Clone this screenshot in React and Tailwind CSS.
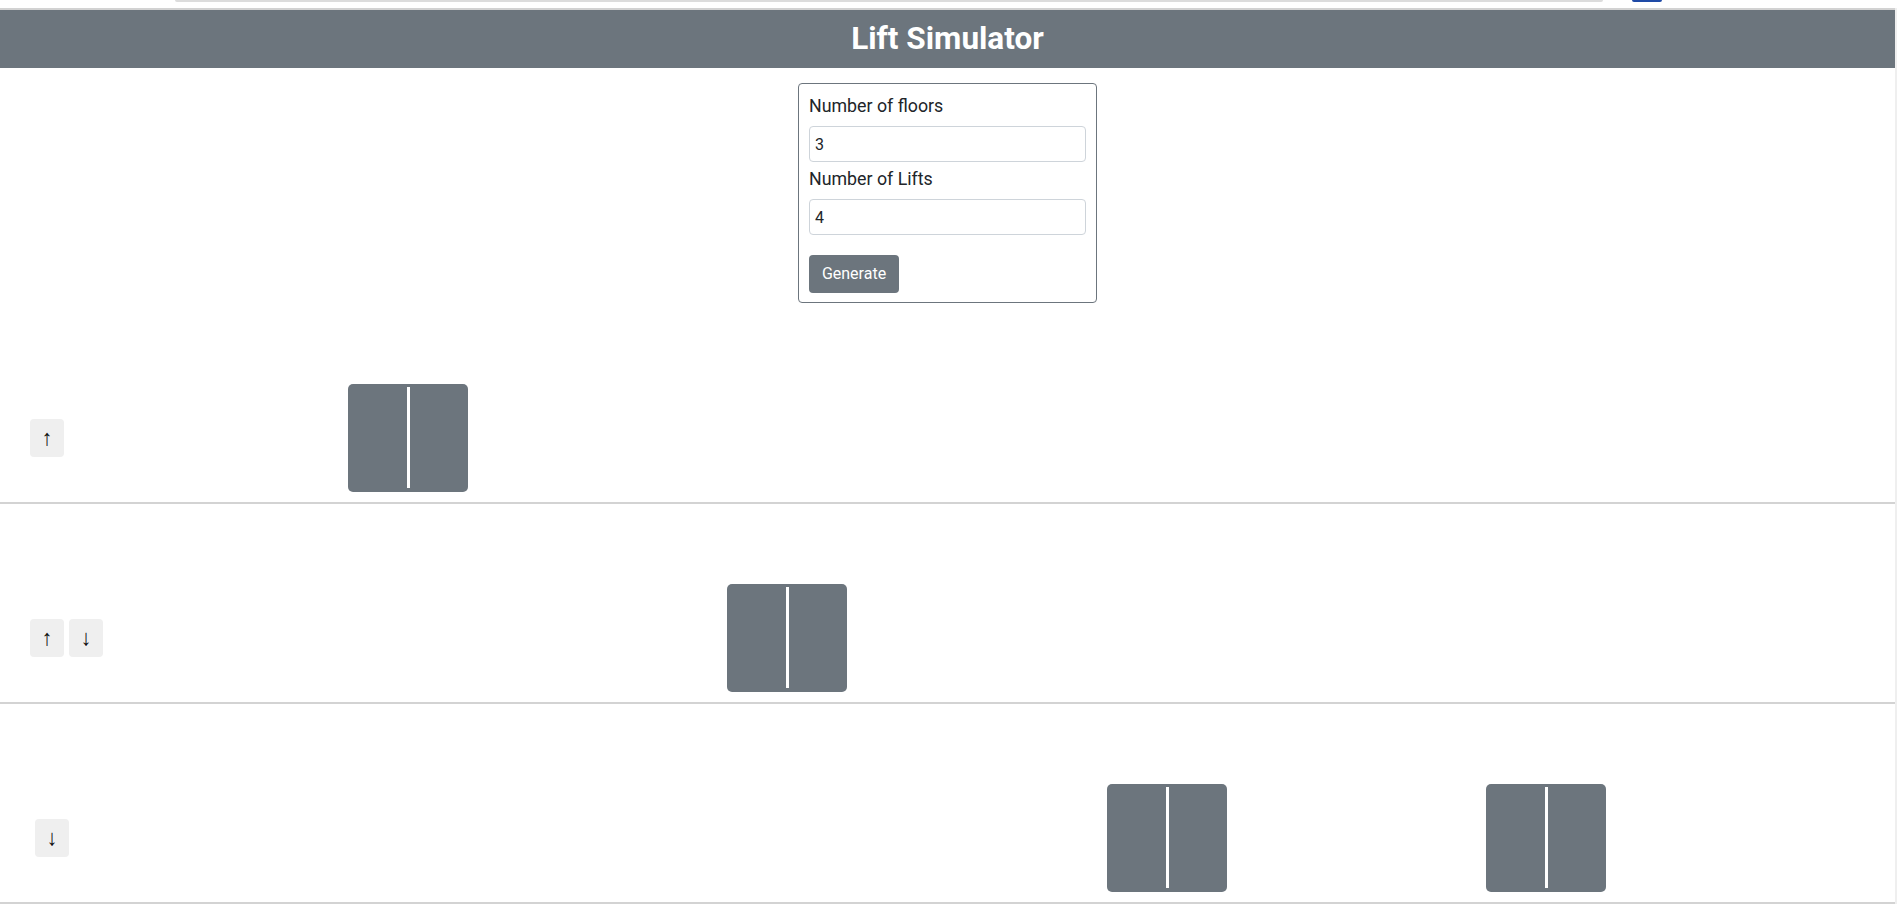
import React from "react";

const floors = [
  { n: 3, up: true, down: false, lifts: [0] },
  { n: 2, up: true, down: true, lifts: [1] },
  { n: 1, up: false, down: true, lifts: [2, 3] },
];

const slotMargins = ["ml-0", "ml-[259px]", "ml-[260px]", "ml-[259px]"];

function Lift() {
  return (
    <div className="w-[120px] h-[108px] bg-[#6c757d] rounded-[5px] flex justify-center pt-[3px] pb-[4px]">
      <div className="w-[3px] h-full bg-white" />
    </div>
  );
}

function ArrowBtn({ dir, className = "" }) {
  return (
    <button
      className={
        "w-[34px] h-[38px] bg-[#efefef] rounded-[4px] flex items-center justify-center text-[22px] leading-none text-[#111] " +
        className
      }
      style={{ fontFamily: "'Liberation Sans', 'DejaVu Sans', sans-serif" }}
    >
      {dir === "up" ? "↑" : "↓"}
    </button>
  );
}

export default function App() {
  return (
    <div
      className="flex bg-white text-[#212529]"
      style={{ fontFamily: "Roboto, 'Liberation Sans', sans-serif" }}
    >
      <div className="w-[1895px] shrink-0">
        <div className="h-[8px] flex items-start">
          <div className="ml-[175px] w-[1428px] h-[2px] bg-[#dcdcdc] rounded-b-full" />
          <div className="ml-[29px] w-[30px] h-[2px] bg-[#1f4aa6] rounded-b-sm" />
        </div>
        <div className="h-[2px] bg-[#d2d2d2]" />
        <div className="h-[58px] bg-[#6c757d] flex items-center justify-center">
          <h1 className="text-white font-bold text-[31.5px] leading-none">Lift Simulator</h1>
        </div>

        <div className="flex justify-center pt-[15px] pb-[1px]">
          <div className="w-[299px] border border-[#6c757d] rounded-[4px] px-[10px] pt-[10px] pb-[9px]">
            <label className="block text-[17.8px] leading-[24px] text-[#212529]">Number of floors</label>
            <input
              readOnly
              value="3"
              className="mt-[8px] block w-full h-[36px] border border-[#ced4da] rounded-[4px] pl-[5px] text-[16px] text-[#212529] outline-none"
            />
            <label className="block mt-[5px] text-[17.8px] leading-[24px] text-[#212529]">Number of Lifts</label>
            <input
              readOnly
              value="4"
              className="mt-[8px] block w-full h-[36px] border border-[#ced4da] rounded-[4px] pl-[5px] text-[16px] text-[#212529] outline-none"
            />
            <button className="mt-[20px] block w-[90px] h-[38px] bg-[#6c757d] rounded-[4px] text-white text-[16px] leading-[24px]">
              Generate
            </button>
          </div>
        </div>

        {floors.map((f) => (
          <div
            key={f.n}
            className="h-[200px] border-b-2 border-[#d3d3d3] flex items-end pb-[10px]"
          >
            <div className="flex items-center h-[108px] pl-[30px]">
              <div className="w-[318px] flex">
                {f.up && <ArrowBtn dir="up" />}
                {f.down && <ArrowBtn dir="down" className="ml-[5px]" />}
              </div>
              <div className="flex">
                {[0, 1, 2, 3].map((i) => (
                  <div key={i} className={"w-[120px] h-[108px] " + slotMargins[i]}>
                    {f.lifts.includes(i) && <Lift />}
                  </div>
                ))}
              </div>
            </div>
          </div>
        ))}
      </div>
      <div className="w-[2px] bg-[#efefef] mt-[8px]" />
    </div>
  );
}
